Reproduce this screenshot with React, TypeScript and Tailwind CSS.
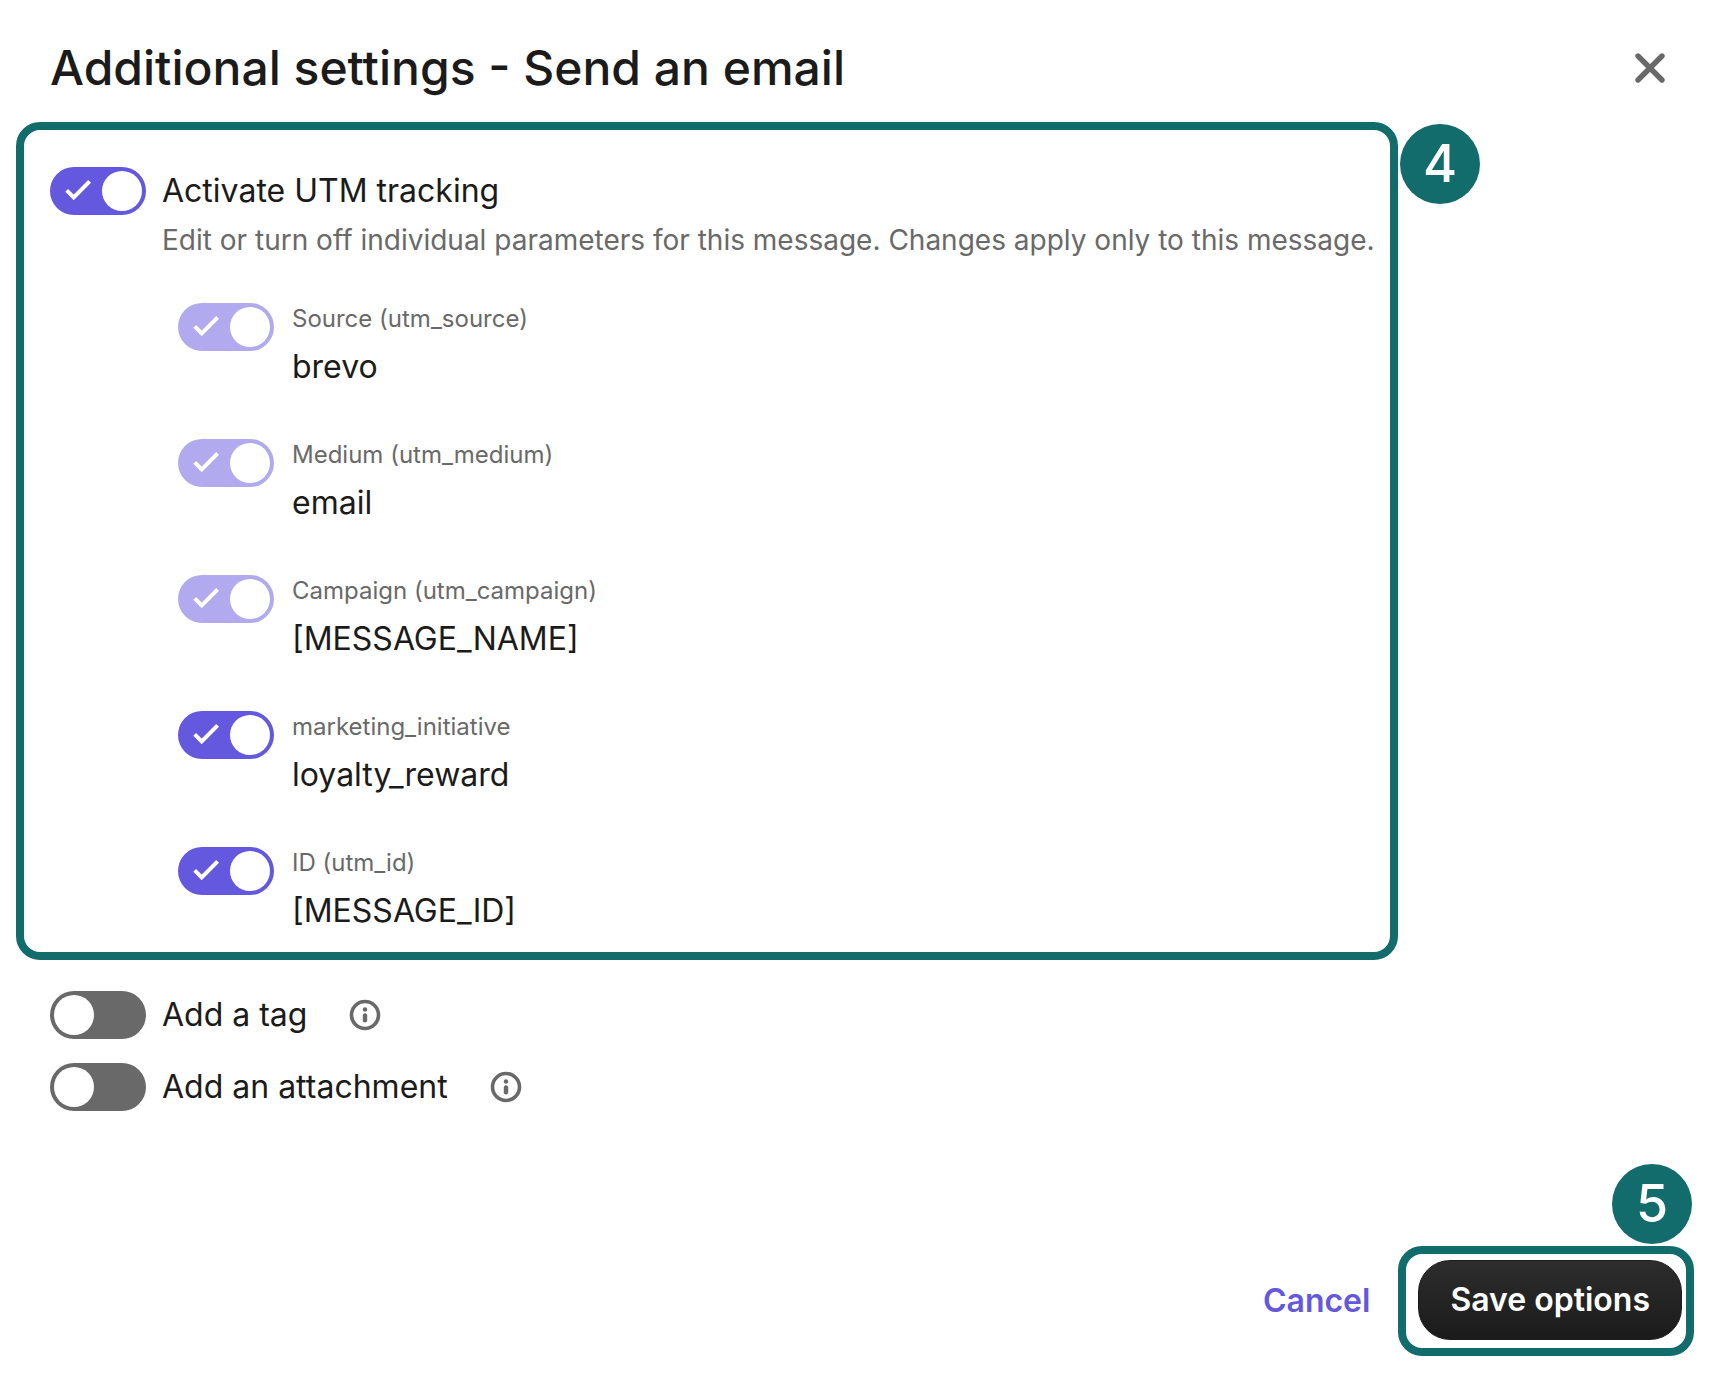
import { useState } from "react";

type Param = {
  id: string;
  label: string;
  value: string;
  locked?: boolean;
};

const params: Param[] = [
  { id: "utm_source", label: "Source (utm_source)", value: "brevo", locked: true },
  { id: "utm_medium", label: "Medium (utm_medium)", value: "email", locked: true },
  { id: "utm_campaign", label: "Campaign (utm_campaign)", value: "[MESSAGE_NAME]", locked: true },
  { id: "marketing_initiative", label: "marketing_initiative", value: "loyalty_reward" },
  { id: "utm_id", label: "ID (utm_id)", value: "[MESSAGE_ID]" },
];

const Toggle = ({ id, initial = false, disabled = false }: { id: string; initial?: boolean; disabled?: boolean }) => {
  const [on, setOn] = useState(initial);
  return (
    <span className="relative h-12 w-24 shrink-0">
      <input
        id={id}
        type="checkbox"
        checked={on}
        disabled={disabled}
        onChange={() => setOn(!on)}
        className="block h-12 w-24 cursor-pointer appearance-none rounded-full bg-[#696969] checked:bg-[#6358de] disabled:cursor-default checked:disabled:bg-[#b1aaee]"
      />
      {on && (
        <svg className="pointer-events-none absolute inset-0" width="96" height="48" fill="none" stroke="#fff" strokeWidth="4">
          <path d="M16.7 23.3 23.7 30.3 39.6 14.4" />
        </svg>
      )}
      <span
        className={
          on
            ? "pointer-events-none absolute top-1 right-1 size-10 rounded-full bg-white"
            : "pointer-events-none absolute top-1 left-1 size-10 rounded-full bg-white"
        }
      />
    </span>
  );
};

const InfoButton = ({ label }: { label: string }) => (
  <button type="button" aria-label={label} className="size-8 text-[#696969]">
    <svg viewBox="0 0 32 32" className="size-8" fill="none" stroke="currentColor" strokeLinecap="round">
      <circle cx="16" cy="16" r="13.5" strokeWidth="3.6" />
      <path d="M16 16.4V21.2" strokeWidth="4.4" />
      <circle cx="16" cy="10.5" r="2.2" fill="currentColor" stroke="none" />
    </svg>
  </button>
);

const ParamRow = ({ id, label, value, locked = false }: Param) => (
  <li className="flex gap-[18px]">
    <Toggle id={id} initial disabled={locked} />
    <label htmlFor={id} className="flex flex-col">
      <span className="text-2xl leading-8 text-[#696969]">{label}</span>
      <span className="mt-2 text-[32px] leading-12">{value}</span>
    </label>
  </li>
);

export default function App() {
  return (
    <div role="dialog" aria-labelledby="title" className="bg-white pb-6 font-['Inter',sans-serif] text-[#1b1b1b]">
      <header className="flex items-center justify-between pt-10 pr-[46px] pl-[50px]">
        <h1 id="title" className="text-[48px] leading-14 font-medium">
          Additional settings - Send an email
        </h1>
        <button type="button" aria-label="Close" className="text-[#696969]">
          <svg width="36" height="36" fill="none" stroke="currentColor" strokeWidth="5.4" strokeLinecap="round">
            <path d="M6 6 30 30M30 6 6 30" />
          </svg>
        </button>
      </header>

      <main>
        <section className="relative mt-[26px] mr-[316px] ml-4 rounded-3xl border-8 border-[#126c6b] pt-[37px] pr-4 pb-[17px] pl-[26px]">
          <div className="flex gap-4">
            <Toggle id="utm" initial />
            <div>
              <label htmlFor="utm" className="block text-[32px] leading-12">
                Activate UTM tracking
              </label>
              <p className="mt-[5px] text-[28px] leading-10 whitespace-nowrap text-[#696969]">
                Edit or turn off individual parameters for this message. Changes apply only to this message.
              </p>
            </div>
          </div>
          <ul className="mt-[43px] ml-32 flex flex-col gap-12">
            {params.map((param) => (
              <ParamRow key={param.id} {...param} />
            ))}
          </ul>
          <span className="absolute -top-1.5 -right-[90px] flex size-20 items-center justify-center rounded-full bg-[#126c6b] text-[52px] leading-none font-medium text-white">
            4
          </span>
        </section>

        <div className="mt-[31px] flex flex-col gap-6 pl-[50px]">
          <div className="flex items-center">
            <Toggle id="tag" />
            <label htmlFor="tag" className="mr-[42px] ml-4 text-[32px] leading-12">
              Add a tag
            </label>
            <InfoButton label="About tags" />
          </div>
          <div className="flex items-center">
            <Toggle id="attachment" />
            <label htmlFor="attachment" className="mr-[42px] ml-4 text-[32px] leading-12">
              Add an attachment
            </label>
            <InfoButton label="About attachments" />
          </div>
        </div>
      </main>

      <footer className="mt-[135px] flex items-center justify-end pr-5">
        <button type="button" className="mr-7 text-[32px] leading-12 font-semibold text-[#6358de]">
          Cancel
        </button>
        <div className="relative rounded-3xl border-8 border-[#126c6b] pt-1.5 pr-1 pb-2 pl-3">
          <button
            type="button"
            className="h-20 rounded-[32px] border border-[#1b1b1b] bg-linear-to-b from-[#2d2d2d] to-[#1b1b1b] px-[31px] text-[32px] font-semibold text-white"
          >
            Save options
          </button>
          <span className="absolute -top-[90px] -right-1.5 flex size-20 items-center justify-center rounded-full bg-[#126c6b] text-[52px] leading-none font-medium text-white">
            5
          </span>
        </div>
      </footer>
    </div>
  );
}
